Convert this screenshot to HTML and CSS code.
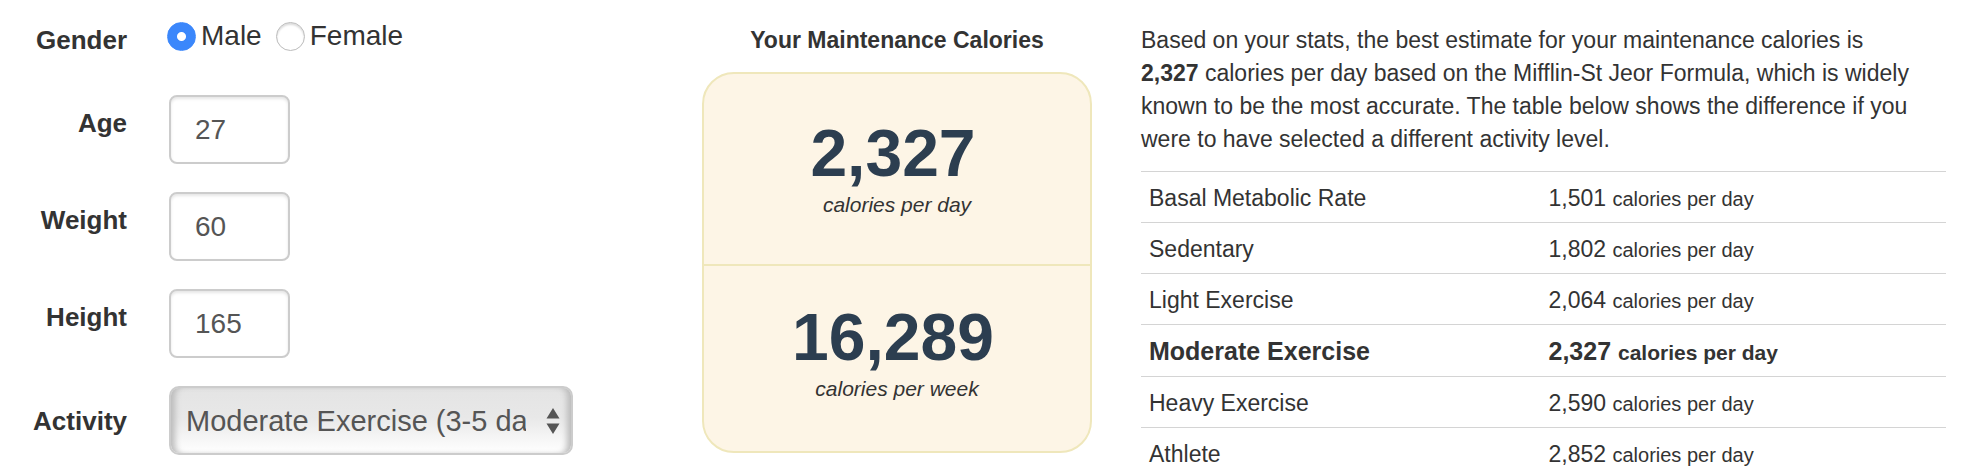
FILE: index.html
```html
<!DOCTYPE html>
<html lang="en">
<head>
<meta charset="utf-8">
<title>Maintenance Calories</title>
<link rel="stylesheet" href="styles.css">
</head>
<body>
<main class="page">
  <form class="stats">
    <div class="row row-gender" role="radiogroup" aria-labelledby="gender-label">
      <span class="label" id="gender-label">Gender</span>
      <div class="radios">
        <label class="option"><input class="radio" type="radio" name="gender" value="male" checked>Male</label>
        <label class="option"><input class="radio" type="radio" name="gender" value="female">Female</label>
      </div>
    </div>
    <div class="row">
      <label class="label" for="age">Age</label>
      <input class="box" id="age" type="text" inputmode="numeric" value="27">
    </div>
    <div class="row">
      <label class="label" for="weight">Weight</label>
      <input class="box" id="weight" type="text" inputmode="numeric" value="60">
    </div>
    <div class="row">
      <label class="label" for="height">Height</label>
      <input class="box" id="height" type="text" inputmode="numeric" value="165">
    </div>
    <div class="row row-activity">
      <label class="label" for="activity">Activity</label>
      <div class="select-wrap">
        <select class="select" id="activity">
          <option>Sedentary (office job)</option>
          <option>Light Exercise (1-2 days/week)</option>
          <option selected>Moderate Exercise (3-5 days/week)</option>
          <option>Heavy Exercise (6-7 days/week)</option>
          <option>Athlete (2x per day)</option>
        </select>
        <svg class="arrows" viewBox="0 0 14 26" aria-hidden="true"><path d="M7 0L13.500 10.500H.5ZM.5 15.500H13.500L7 26Z" fill="#555"/></svg>
      </div>
    </div>
  </form>

  <section class="summary">
    <h2 class="summary-title">Your Maintenance Calories</h2>
    <div class="card">
      <div class="half">
        <div class="big">2,327</div>
        <div class="unit">calories per day</div>
      </div>
      <div class="half">
        <div class="big">16,289</div>
        <div class="unit">calories per week</div>
      </div>
    </div>
  </section>

  <section class="details">
    <p class="intro">Based on your stats, the best estimate for your maintenance calories is <strong>2,327</strong> calories per day based on the Mifflin-St Jeor Formula, which is widely known to be the most accurate. The table below shows the difference if you were to have selected a different activity level.</p>
    <table class="levels">
      <tbody>
        <tr><td>Basal Metabolic Rate</td><td>1,501 <span class="per">calories per day</span></td></tr>
        <tr><td>Sedentary</td><td>1,802 <span class="per">calories per day</span></td></tr>
        <tr><td>Light Exercise</td><td>2,064 <span class="per">calories per day</span></td></tr>
        <tr class="current"><td>Moderate Exercise</td><td>2,327 <span class="per">calories per day</span></td></tr>
        <tr><td>Heavy Exercise</td><td>2,590 <span class="per">calories per day</span></td></tr>
        <tr><td>Athlete</td><td>2,852 <span class="per">calories per day</span></td></tr>
      </tbody>
    </table>
  </section>
</main>
</body>
</html>
```
FILE: styles.css
```css
* {
  box-sizing: border-box;
}

body {
  margin: 0;
  background: #fff;
  color: #333;
  font-family: "Liberation Sans", Arial, Helvetica, sans-serif;
}

.page {
  display: grid;
  grid-template-columns: 678fr 390fr 854fr;
  padding: 0 34px 0 24px;
}

/* Form */
.stats {
  display: flex;
  flex-direction: column;
  gap: 28px;
  padding-top: 20px;
}

.row {
  display: grid;
  grid-template-columns: 103px 1fr;
  column-gap: 42px;
  align-items: start;
}

.label {
  padding-top: 13px;
  font-size: 26px;
  font-weight: bold;
  line-height: 30px;
  text-align: right;
}

.row-gender {
  column-gap: 40px;
  padding-bottom: 12px;
}

.row-gender .label {
  padding-top: 5px;
}

.radios {
  display: flex;
  gap: 14px;
}

.option {
  display: flex;
  align-items: center;
  gap: 5px;
  font-size: 28px;
  line-height: 32px;
}

.radio {
  appearance: none;
  width: 29px;
  height: 29px;
  margin: 0;
  border: 1px solid #bbb;
  border-radius: 50%;
  background: #fff;
  box-shadow: inset 0 2px 2px #ddd;
}

.radio:checked {
  border-color: #3b87fb;
  background: radial-gradient(circle, #fff 0 4px, #3b87fb 5px);
  box-shadow: none;
}

.box,
.select {
  height: 69px;
  border: 2px solid #ccc;
  border-radius: 8px;
  color: #555;
  font-family: inherit;
}

.box {
  width: 121px;
  padding: 0 24px;
  background: #fff;
  font-size: 28px;
  box-shadow: inset 0 2px 3px #e6e6e6;
}

.row-activity {
  align-items: center;
}

.row-activity .label {
  padding-top: 0;
}

.select-wrap {
  position: relative;
  max-width: 404px;
}

.select {
  display: block;
  appearance: none;
  width: 100%;
  padding: 0 45px 0 15px;
  border-radius: 10px;
  background: linear-gradient(#e4e4e4, #e8e8e8 45%, #fff);
  font-size: 29px;
  box-shadow: inset 7px 0 6px -3px #bbb, inset -7px 0 6px -3px #bbb;
}

.arrows {
  position: absolute;
  top: 22px;
  right: 13px;
  width: 14px;
  height: 26px;
  pointer-events: none;
}

/* Summary card */
.summary {
  padding-top: 27px;
  text-align: center;
}

.summary-title {
  margin: 0 0 19px;
  font-size: 23px;
  line-height: 26px;
}

.card {
  border: 2px solid #efe7bb;
  border-radius: 32px;
  background: #fdf5e6;
}

.half {
  padding: 41px 0 45px;
}

.half + .half {
  padding: 33px 0 48px;
  border-top: 2px solid #efe7bb;
}

.big {
  padding-right: 8px;
  color: #2c3e50;
  font-size: 66px;
  font-weight: bold;
  line-height: 76px;
}

.unit {
  font-size: 21px;
  font-style: italic;
  line-height: 28px;
}

/* Activity comparison */
.details {
  padding: 24px 0 0 49px;
}

.intro {
  margin: 0 0 15px;
  padding-right: 24px;
  font-size: 23px;
  line-height: 33px;
}

.levels {
  width: 100%;
  border-collapse: collapse;
  table-layout: fixed;
  font-size: 23px;
  line-height: 34px;
}

.levels td {
  padding: 9px 8px 7px;
  border-top: 1px solid #d4d4d4;
}

.levels td + td {
  padding-left: 5px;
}

.levels tr:last-child td {
  padding-bottom: 4px;
}

.per {
  font-size: 20px;
  line-height: 1;
}

.levels .current {
  font-size: 25px;
  font-weight: bold;
  line-height: 35px;
}

.current .per {
  font-size: 21px;
  line-height: 1;
}
```
